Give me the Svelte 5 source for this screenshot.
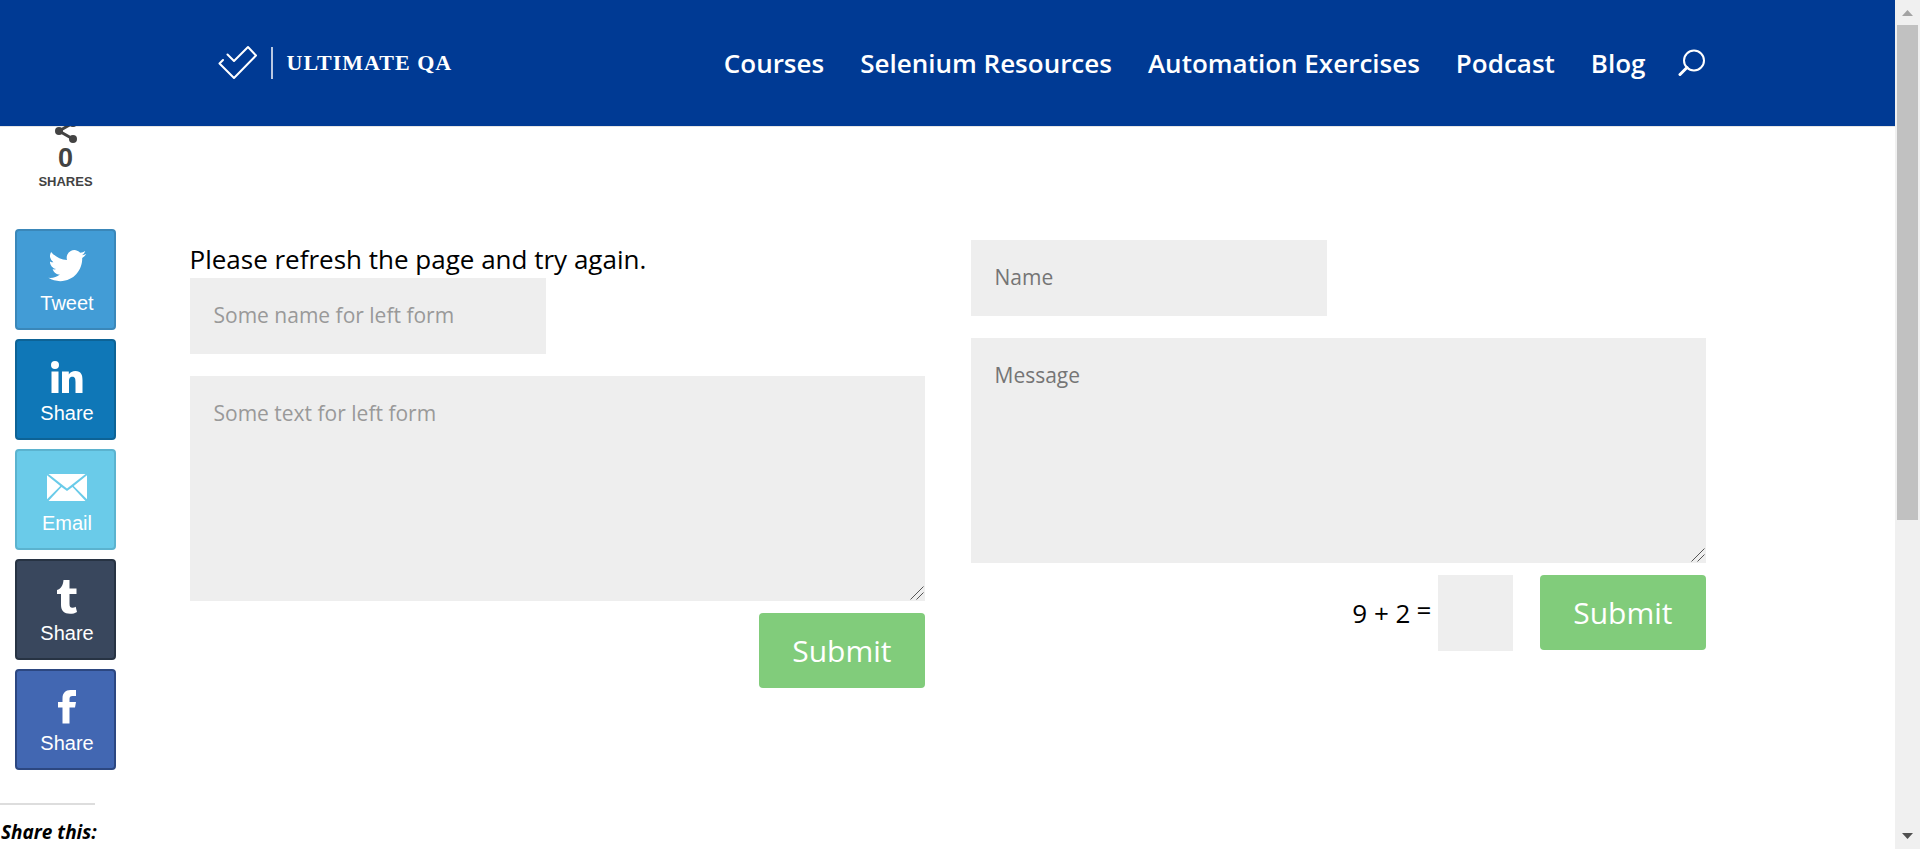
<script>
  const nav = ['Courses', 'Selenium Resources', 'Automation Exercises', 'Podcast', 'Blog'];

  const networks = [
    {
      id: 'twitter', label: 'Tweet', box: '2.4 2.5 34.2 30.8',
      path: 'M36 6.8c-1.200.5-2.500.9-3.800 1 1.400-.8 2.400-2.100 2.900-3.600-1.300.8-2.700 1.300-4.200 1.600A6.600 6.600 0 0 0 19.500 11.900C14 11.600 9.200 9 5.900 5a6.600 6.600 0 0 0 2 8.900c-1.100 0-2.100-.3-3-.8v.1c0 3.200 2.300 5.900 5.300 6.500-.9.3-2 .3-3 .1.8 2.600 3.300 4.600 6.200 4.600A13.300 13.300 0 0 1 3.600 27.200C6.600 29 10 30 13.700 30c12.200 0 19.100-10.200 18.800-19.700 1.400-.9 2.500-2.100 3.500-3.500z'
    },
    {
      id: 'linkedin', label: 'Share', box: '0 0 40 36',
      path: 'M4.500 12.500h7V34h-7zM8 2a4 4 0 1 1 0 8 4 4 0 0 1 0-8zM15 12.500h6.800v3c1.200-2.200 3.700-3.600 6.600-3.600 5.800 0 7.100 3.900 7.100 9.400V34h-7V23c0-2.700-.3-5.200-3.100-5.200-3 0-3.400 2.300-3.400 5V34h-7z'
    },
    {
      id: 'email', label: 'Email', box: '0 0 40 36',
      path: 'M1.500 5h37L20 19.500zM0 6.200 13.300 17 0 30.300zM40 6.200v24.100L26.700 17zM14.500 18l5.500 4 5.500-4L38.500 32h-37z'
    },
    {
      id: 'tumblr', label: 'Share', box: '0 0 40 36',
      path: 'M16.500 1h6v8.500h7V15h-7v9.500c0 3 .6 4.200 3 4.200 1.200 0 2.200-.4 3.200-1l1.300 5.200c-2 1.300-4.200 1.800-7 1.800-6 0-9-3-9-8.700V15h-4V11c4-1.200 6-4.500 6.500-10z'
    },
    {
      id: 'facebook', label: 'Share', box: '0 0 40 36',
      path: 'M15.500 34.500V18.500H11v-5.500h4.500V9.500C15.500 4 18.500 1 23.500 1H29v6h-3.500c-2.200 0-3 .9-3 3v3h6.500l-1 5.500h-5.500v16z'
    }
  ];
</script>

<div class="window">
  <div class="page">
    <header>
      <a class="logo" href="#home" aria-label="Ultimate QA">
        <svg class="check" viewBox="0 0 40 36" aria-hidden="true">
          <path d="M6 15 2.500 18.500 17 33 39 10.500 31 2 17 16 10.500 9.500" />
        </svg>
        <span class="bar"></span>
        <span class="brand">ULTIMATE QA</span>
      </a>
      <nav>
        {#each nav as item}
          <a href="#{item}">{item}</a>
        {/each}
        <button class="search" aria-label="Search">
          <svg viewBox="0 0 28 28" aria-hidden="true">
            <circle cx="16" cy="11.500" r="10" />
            <path d="M9 18.500 2 25.500" />
          </svg>
        </button>
      </nav>
    </header>

    <main>
      <aside>
        <div class="total">
          <svg viewBox="0 0 24 24" aria-hidden="true">
            <path d="M19 4 5 12l14 8" />
            <circle cx="19" cy="4" r="4" />
            <circle cx="5" cy="12" r="4" />
            <circle cx="19" cy="20" r="4" />
          </svg>
          <strong>0</strong>
          <span>SHARES</span>
        </div>
        <div class="buttons">
          {#each networks as n}
            <button class="share {n.id}">
              <svg viewBox={n.box} aria-hidden="true"><path d={n.path} /></svg>
              <span>{n.label}</span>
            </button>
          {/each}
        </div>
        <hr />
        <h3>Share this:</h3>
      </aside>

      <form class="left" onsubmit={(e) => e.preventDefault()}>
        <p>Please refresh the page and try again.</p>
        <input class="name" type="text" aria-label="Name" placeholder="Some name for left form" />
        <div class="area">
          <textarea aria-label="Message" placeholder="Some text for left form"></textarea>
          <svg viewBox="0 0 14 14" aria-hidden="true"><path d="M.5 13.500l13-13M6.500 13.500l7-7" /></svg>
        </div>
        <div class="actions"><button class="submit">Submit</button></div>
      </form>

      <form class="right" onsubmit={(e) => e.preventDefault()}>
        <input class="name" type="text" aria-label="Name" placeholder="Name" />
        <div class="area">
          <textarea aria-label="Message" placeholder="Message"></textarea>
          <svg viewBox="0 0 14 14" aria-hidden="true"><path d="M.5 13.500l13-13M6.500 13.500l7-7" /></svg>
        </div>
        <div class="actions">
          <label for="captcha"><span>9 + 2</span><span class="equals">=</span></label>
          <input id="captcha" class="captcha" type="text" />
          <button class="submit">Submit</button>
        </div>
      </form>
    </main>
  </div>

  <div class="scrollbar" aria-hidden="true">
    <svg class="up" viewBox="0 0 25 25"><path d="M7 16 12.500 10 18 16z" /></svg>
    <div class="track"><div class="thumb"></div></div>
    <svg class="down" viewBox="0 0 25 25"><path d="M7 9 12.500 15 18 9z" /></svg>
  </div>
</div>

<style>
  :global(body) {
    margin: 0;
    background: #fff;
  }
  .window {
    display: grid;
    grid-template-columns: minmax(0, 1fr) 25px;
    height: 100vh;
    overflow: hidden;
    font-family: 'Open Sans', 'Noto Sans', sans-serif;
    font-size: 26px;
    color: #000;
  }
  .window * {
    box-sizing: border-box;
  }
  .page {
    overflow: hidden;
  }
  button,
  input,
  textarea {
    margin: 0;
    border: 0;
    border-radius: 0;
    font-family: inherit;
  }
  header {
    position: relative;
    z-index: 1;
    display: flex;
    align-items: center;
    justify-content: space-between;
    padding: 0 10%;
    height: 126px;
    background: #003a94;
    box-shadow: 0 1px 0 rgba(0, 0, 0, 0.1);
  }
  .logo {
    display: flex;
    align-items: center;
    margin-left: 27px;
    color: #fff;
    text-decoration: none;
  }
  .check {
    width: 40px;
    height: 36px;
    fill: none;
    stroke: #fff;
    stroke-width: 2;
    stroke-linejoin: round;
    stroke-linecap: round;
  }
  .bar {
    width: 2px;
    height: 32px;
    margin: 0 14px;
    background: #b9c8e2;
  }
  .brand {
    font: bold 22px/32px 'Liberation Serif', serif;
    letter-spacing: 1px;
  }
  nav {
    display: flex;
    align-items: center;
    gap: 36px;
  }
  nav a {
    color: #fff;
    font-weight: 600;
    line-height: 36px;
    text-decoration: none;
    white-space: nowrap;
  }
  .search {
    display: flex;
    margin-left: -4px;
    padding: 0;
    background: none;
  }
  .search svg {
    width: 28px;
    height: 28px;
    fill: none;
    stroke: #fff;
    stroke-width: 2;
    stroke-linecap: round;
  }
  .search path {
    stroke-width: 3;
  }
  main {
    display: grid;
    grid-template-columns: 10% minmax(0, 1fr) minmax(0, 1fr) 10%;
  }
  .left {
    margin-right: 23px;
  }
  .right {
    margin-left: 23px;
  }
  form {
    padding-top: 114px;
  }
  p {
    margin: 0;
    line-height: 38px;
  }
  input,
  textarea {
    display: block;
    padding: 23px 24px 25px;
    background: #eee;
    color: #4e4e4e;
    font-size: 21px;
    line-height: 28px;
  }
  .name {
    width: 356px;
    max-width: 100%;
    height: 76px;
  }
  .area {
    position: relative;
    margin: 22px 0 12px;
  }
  textarea {
    width: 100%;
    height: 225px;
    resize: none;
  }
  .area svg {
    position: absolute;
    right: 1px;
    bottom: 1px;
    width: 14px;
    height: 14px;
    stroke: #555;
  }
  input::placeholder,
  textarea::placeholder {
    color: #757575;
  }
  .left input::placeholder,
  .left textarea::placeholder {
    color: #999;
  }
  .actions {
    display: flex;
    justify-content: flex-end;
    align-items: flex-start;
  }
  label {
    display: flex;
    gap: 6px;
    margin-right: 7px;
    line-height: 76px;
  }
  .equals {
    margin-top: -3px;
  }
  .captcha {
    width: 75px;
    height: 76px;
    margin-right: 27px;
  }
  .submit {
    height: 75px;
    padding: 0 33px;
    border-radius: 4px;
    background: #81cc7b;
    color: #fff;
    font-size: 30px;
  }
  .total {
    display: flex;
    flex-direction: column;
    align-items: center;
    width: 101px;
    margin: -7px 0 0 15px;
    color: #434343;
    font-family: 'Liberation Sans', Arial, sans-serif;
  }
  .total svg {
    width: 24px;
    height: 24px;
    fill: #434343;
    stroke: #434343;
  }
  .total path {
    fill: none;
    stroke-width: 3;
  }
  .total circle {
    stroke: none;
  }
  .total strong {
    font-size: 27px;
    line-height: 30px;
  }
  .total span {
    font-size: 13px;
    font-weight: bold;
    line-height: 18px;
  }
  .buttons {
    display: grid;
    gap: 9px;
    width: 101px;
    margin: 38px 0 0 15px;
  }
  .share {
    display: flex;
    flex-direction: column;
    align-items: center;
    height: 101px;
    padding: 18px 0 0 3px;
    border: 2px solid;
    border-radius: 4px;
    color: #fff;
    font: 20px/24px 'Liberation Sans', Arial, sans-serif;
  }
  .share svg {
    width: 40px;
    height: 36px;
    margin-bottom: 6px;
    fill: #fff;
  }
  .twitter {
    background: #429cd6;
    border-color: #3a87b9;
  }
  .linkedin {
    background: #0f77b7;
    border-color: #0d6396;
  }
  .email {
    background: #6acbe9;
    border-color: #5bb3cf;
  }
  .tumblr {
    background: #39475d;
    border-color: #273343;
  }
  .facebook {
    background: #4267b2;
    border-color: #2c4781;
  }
  hr {
    width: 50%;
    height: 2px;
    margin: 33px 0 0;
    border: 0;
    background: #ddd;
  }
  h3 {
    margin: 15px 0 0 1px;
    font-size: 19px;
    font-style: italic;
    font-weight: 700;
    line-height: 24px;
  }
  .scrollbar {
    display: flex;
    flex-direction: column;
    background: #f0f0f0;
  }
  .scrollbar svg {
    width: 25px;
    height: 25px;
    flex: none;
  }
  .up {
    fill: #a3a3a3;
  }
  .down {
    fill: #505050;
  }
  .track {
    flex: 1;
    padding: 0 2px;
  }
  .thumb {
    height: 62%;
    background: #c1c1c1;
  }
</style>
